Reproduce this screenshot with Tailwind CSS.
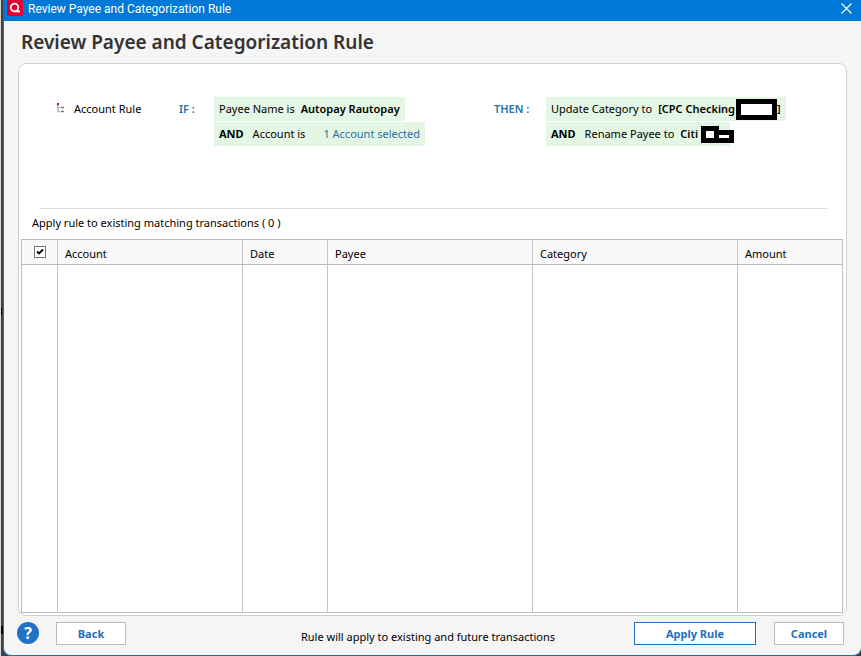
<!DOCTYPE html>
<html lang="en">
<head>
    <meta charset="UTF-8">
    <meta name="viewport" content="width=device-width, initial-scale=1.0">
    <title>Review Payee and Categorization Rule</title>
    <script src="https://cdn.jsdelivr.net/npm/@tailwindcss/browser@4"></script>
</head>
<body class="relative bg-[#404040] border-l border-[#d8d8d8] pl-[2px] font-['Noto_Sans',sans-serif] text-[11px] leading-4 text-black">
    <div class="absolute -left-px top-[308px] w-[2px] h-[7px] bg-black"></div>
    <div class="absolute left-0 bottom-[22px] w-[2px] h-2 bg-black"></div>
    <div class="min-h-screen flex flex-col bg-[#f5f5f5] border-l border-b border-[#0f74c4] rounded-b-lg">
        <!-- Title bar -->
        <header class="h-[21px] shrink-0 flex items-center bg-[#0078d7] text-white pl-[3px] pr-[9px]">
            <svg class="w-4 h-4 mb-[5px]" viewBox="0 0 16 16" fill="none" aria-hidden="true">
                <rect width="16" height="16" rx="2" fill="#e4002b"/>
                <circle cx="7.5" cy="7.5" r="3.800" stroke="#fff" stroke-width="1.800"/>
                <path d="M8 11.400h5" stroke="#fff" stroke-width="1.800"/>
            </svg>
            <span class="flex-1 ml-[5px] mb-[3px] text-xs leading-4 font-[Roboto,sans-serif]">Review Payee and Categorization Rule</span>
            <button type="button" aria-label="Close" class="mb-[5px]">
                <svg class="w-[11px] h-[11px]" viewBox="0 0 11 11" stroke="#fff" stroke-width="1.1"><path d="M.5.5l10 10M10.500.5l-10 10"/></svg>
            </button>
        </header>

        <h1 class="h-[42px] shrink-0 pl-[17px] flex items-center text-[19px] font-semibold text-[#333]">Review Payee and Categorization Rule</h1>

        <!-- Rule card -->
        <main class="flex-1 flex flex-col ml-[14px] mr-[14px] px-[2px] pb-[2px] bg-white border border-[#d0d0d0] rounded-lg">
            <section class="h-[145px] ml-[18px] mr-[17px] pt-[33px] pl-[18px] flex items-start border-b border-[#dcdcdc] whitespace-nowrap">
                <svg class="w-2 h-[10px] mt-[6px]" viewBox="0 0 8 10" fill="none" aria-hidden="true">
                    <path d="M1 2v7.500" stroke="#b0b0b0" stroke-width="1.500"/>
                    <path d="M1.500 4.500h2M1.500 8.500h2" stroke="#b0b0b0"/>
                    <path d="M4 4.500h3M4 8.500h3" stroke="#777" stroke-width="1.500"/>
                    <path d="M0 0h2v2H0z" fill="#d5002b"/>
                </svg>
                <span class="w-[105px] ml-[9px] pt-1">Account Rule</span>
                <span class="w-[35px] pt-1 font-semibold text-[#2a6fa8]">IF :</span>
                <div class="w-[280px] flex flex-col items-start gap-px">
                    <div class="h-6 px-[5px] flex items-center gap-[6px] bg-[#e4f7e4]">
                        <span>Payee Name is</span><b class="font-semibold">Autopay Rautopay</b>
                    </div>
                    <div class="h-6 px-[5px] flex items-center bg-[#e4f7e4]">
                        <b>AND</b><span class="ml-[9px]">Account is</span>
                        <a href="#" class="ml-[18px] text-[#2f6ca3]">1 Account selected</a>
                    </div>
                </div>
                <span class="w-[52px] pt-1 font-semibold text-[#2a6fa8]">THEN :</span>
                <div class="flex flex-col items-start gap-px">
                    <div class="h-6 px-[5px] flex items-center bg-[#e4f7e4]">
                        <span>Update Category to</span><b class="ml-[6px] font-semibold">[CPC Checking</b>
                        <span class="w-[41px] h-[21px] ml-px -my-px bg-white border-[5px] border-black"></span><b class="font-semibold">]</b>
                    </div>
                    <div class="h-6 pl-[5px] flex items-center bg-[#e4f7e4]">
                        <b>AND</b><span class="ml-[9px]">Rename Payee to</span><b class="ml-[6px] font-semibold">Citi</b>
                        <svg class="w-[33px] h-[17px] ml-[3px] -mr-1" viewBox="0 0 33 17" aria-hidden="true">
                            <path d="M0 0h18v4h15v13H0z"/>
                            <path d="M5 5h8v7H5zM18 9h10v3H18z" fill="#fff"/>
                        </svg>
                    </div>
                </div>
            </section>
            <p class="h-[30px] pl-[11px] pt-[6px]">Apply rule to existing matching transactions ( 0 )</p>
            <table class="flex-1 flex flex-col mr-px border border-[#bcbcbc]">
                <thead class="block bg-[#f9f9f9] border-b border-[#bcbcbc]">
                    <tr class="h-6 grid grid-cols-[36fr_185fr_85fr_205fr_205fr_104fr] divide-x divide-[#c4c4c4] text-left">
                        <th class="flex items-center justify-center">
                            <input type="checkbox" checked aria-label="Select all" class="appearance-none w-3 h-3 bg-white border border-[#777]">
                            <svg class="absolute w-2 h-2 pointer-events-none" viewBox="0 0 8 8" fill="none" stroke="#000" stroke-width="1.800" aria-hidden="true"><path d="M1 3.500L3 5.500l4-4"/></svg>
                        </th>
                        <th class="pl-[7px] pt-[6px] font-normal">Account</th>
                        <th class="pl-[7px] pt-[6px] font-normal">Date</th>
                        <th class="pl-[7px] pt-[6px] font-normal">Payee</th>
                        <th class="pl-[7px] pt-[6px] font-normal">Category</th>
                        <th class="pl-[7px] pt-[6px] font-normal">Amount</th>
                    </tr>
                </thead>
                <tbody class="flex-1 flex">
                    <tr class="flex-1 grid grid-cols-[36fr_185fr_85fr_205fr_205fr_104fr] divide-x divide-[#c4c4c4]">
                        <td></td><td></td><td></td><td></td><td></td><td></td>
                    </tr>
                </tbody>
            </table>
        </main>

        <!-- Actions -->
        <footer class="h-[39px] shrink-0 flex items-start pt-[6px] pl-[13px] pr-[17px] text-[#1d70b8]">
            <button type="button" aria-label="Help" class="w-[22px] h-[22px] rounded-full bg-[#2371c4] text-white text-base leading-5 font-bold">?</button>
            <button type="button" class="w-[70px] h-[23px] ml-[17px] bg-white border border-[#bcbcbc] font-bold">Back</button>
            <p class="flex-1 pt-[7px] pl-24 text-center text-black">Rule will apply to existing and future transactions</p>
            <button type="button" class="w-[122px] h-[23px] bg-white border border-[#1d70b8] font-bold">Apply Rule</button>
            <button type="button" class="w-[70px] h-[23px] ml-[18px] bg-white border border-[#bcbcbc] font-bold">Cancel</button>
        </footer>
    </div>
</body>
</html>
